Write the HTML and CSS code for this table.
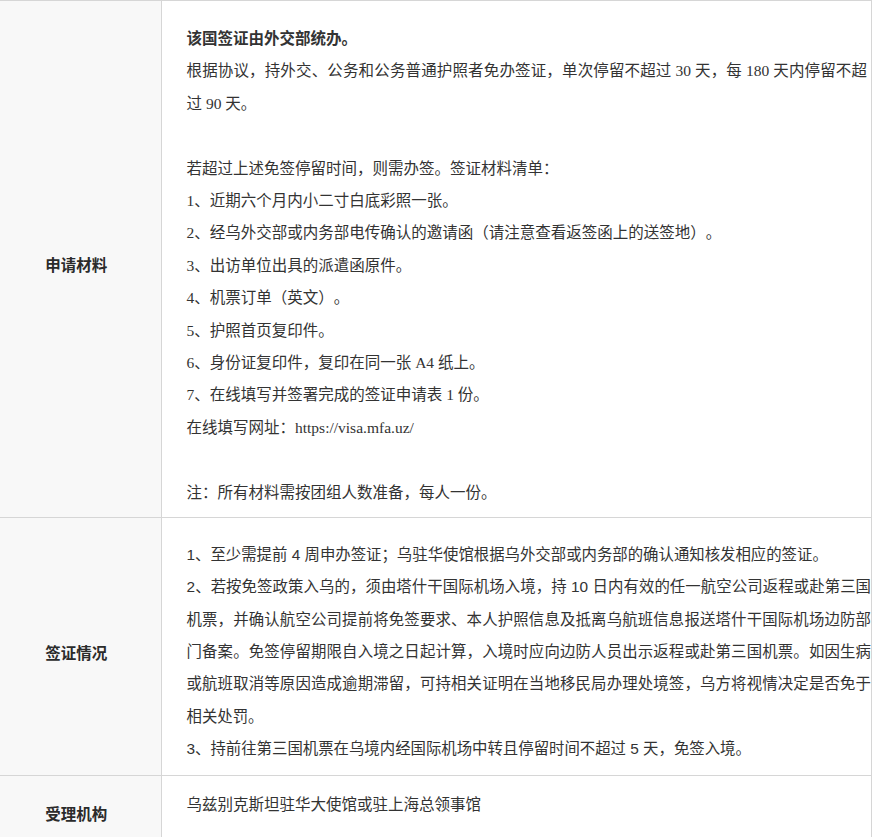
FILE: index.html
```html
<!DOCTYPE html>
<html lang="zh-CN">
<head>
  <meta charset="UTF-8">
  <meta name="viewport" content="width=device-width, initial-scale=1.0">
  <title>乌兹别克斯坦签证</title>
  <link rel="stylesheet" href="styles.css">
</head>
<body>
  <table class="visa">
    <tr>
      <th class="visa__label">申请材料</th>
      <td class="visa__text">
        <p><strong>该国签证由外交部统办。</strong></p>
        <p>根据协议，持外交、公务和公务普通护照者免办签证，单次停留不超过 30 天，每 180 天内停留不超过 90 天。</p>
        <p><br></p>
        <p>若超过上述免签停留时间，则需办签。签证材料清单：</p>
        <p>1、近期六个月内小二寸白底彩照一张。</p>
        <p>2、经乌外交部或内务部电传确认的邀请函（请注意查看返签函上的送签地）。</p>
        <p>3、出访单位出具的派遣函原件。</p>
        <p>4、机票订单（英文）。</p>
        <p>5、护照首页复印件。</p>
        <p>6、身份证复印件，复印在同一张 A4 纸上。</p>
        <p>7、在线填写并签署完成的签证申请表 1 份。</p>
        <p>在线填写网址：https://visa.mfa.uz/</p>
        <p><br></p>
        <p>注：所有材料需按团组人数准备，每人一份。</p>
      </td>
    </tr>
    <tr>
      <th class="visa__label">签证情况</th>
      <td class="visa__text visa__text--sans">
        <p>1、至少需提前 4 周申办签证；乌驻华使馆根据乌外交部或内务部的确认通知核发相应的签证。</p>
        <p>2、若按免签政策入乌的，须由塔什干国际机场入境，持 10 日内有效的任一航空公司返程或赴第三国机票，并确认航空公司提前将免签要求、本人护照信息及抵离乌航班信息报送塔什干国际机场边防部门备案。免签停留期限自入境之日起计算，入境时应向边防人员出示返程或赴第三国机票。如因生病或航班取消等原因造成逾期滞留，可持相关证明在当地移民局办理处境签，乌方将视情决定是否免于相关处罚。</p>
        <p>3、持前往第三国机票在乌境内经国际机场中转且停留时间不超过 5 天，免签入境。</p>
      </td>
    </tr>
    <tr>
      <th class="visa__label">受理机构</th>
      <td class="visa__text visa__text--short">
        <p>乌兹别克斯坦驻华大使馆或驻上海总领事馆</p>
      </td>
    </tr>
  </table>
</body>
</html>
```

FILE: styles.css
```css
* { padding:0; margin:0; box-sizing:border-box; }

:root {
  --color-text: #333333;
  --color-label-bg: #f8f8f8;
  --color-border: #d6d6d6;
  --line: 32.4px;
}

body {
  background-color: #ffffff;
  color: var(--color-text);
  font-family: "Liberation Serif", "Noto Sans CJK SC", serif;
}

.visa {
  width: 872px;
  border-collapse: collapse;
  table-layout: fixed;
}

.visa td,
.visa th {
  border: 1px solid var(--color-border);
}

.visa__label {
  width: 161px;
  border-left: none !important;
  background-color: var(--color-label-bg);
  font-family: "Noto Sans CJK SC", sans-serif;
  font-size: 15.5px;
  font-weight: bold;
  text-align: center;
  vertical-align: middle;
  padding: 10px 8px 0 0;
  color: #2b2b2b;
}

.visa__text {
  font-size: 15.5px;
  line-height: var(--line);
  text-align: justify;
  text-spacing-trim: space-all;
  vertical-align: top;
  padding: 20px 4px 8px 25px;
}

.visa__text strong {
  font-family: "Noto Sans CJK SC", sans-serif;
  font-weight: bold;
}

.visa__text--sans {
  font-family: "Liberation Sans", "Noto Sans CJK SC", sans-serif;
  font-size: 15.4px;
  line-height: 32.3px;
  padding: 21px 0 10px 25px;
}

.visa__text--short {
  font-family: "Noto Sans CJK SC", sans-serif;
  padding: 11px 0 20px 25px;
}
```
